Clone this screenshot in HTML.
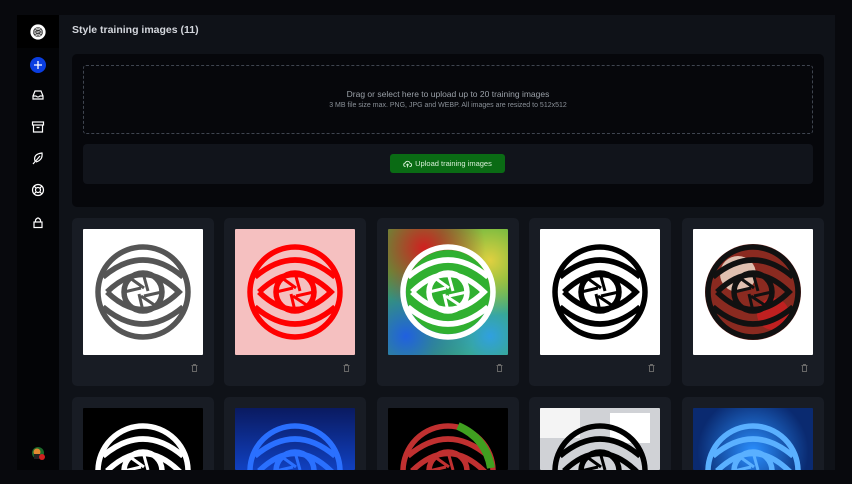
<!DOCTYPE html>
<html><head><meta charset="utf-8"><style>
*{margin:0;padding:0;box-sizing:border-box}
body{width:852px;height:484px;background:#08090d;font-family:"Liberation Sans",sans-serif;position:relative;overflow:hidden}
.side{position:absolute;left:17px;top:15px;width:42px;height:455px;background:#030406;border-radius:6px 0 0 0}
.side .logo{position:absolute;left:0;top:0;width:42px;height:33px;background:#000}
.ic{position:absolute;left:13px;width:16px;height:16px}
.main{position:absolute;left:59px;top:15px;width:776px;height:455px;background:#0f1218;overflow:hidden}
.title{position:absolute;left:13px;top:9px;color:#d4d7dd;font-size:10.5px;font-weight:bold}
.up{position:absolute;left:13px;top:39px;width:752px;height:153px;background:#06070b;border-radius:5px}
.dash{position:absolute;left:11px;top:11px;width:730px;height:69px;border:1px dashed #3f4550;border-radius:3px;text-align:center;color:#9aa0a8}
.dash .a{font-size:8.5px;margin-top:23px}
.dash .b{font-size:7px;margin-top:3px;color:#8a9098}
.bp{position:absolute;left:11px;top:90px;width:730px;height:40px;background:#11141b;border-radius:4px}
.btn{position:absolute;left:307px;top:10px;width:115px;height:19px;background:#0a6b14;border-radius:3px;color:#d8f0d8;font-size:7.5px;line-height:19px;text-align:center}
.btn svg{vertical-align:-2px;margin-right:3px}
.card{position:absolute;width:142px;height:168px;background:#181c24;border-radius:5px;overflow:hidden}
.card.r2{height:73px;border-radius:5px 5px 0 0}
.card .im{position:absolute;left:11px;top:11px;width:120px;height:126px;overflow:hidden;border-radius:1px}
.card.r2 .im{height:62px}
.card .tr{position:absolute;left:119px;top:146px;width:7px;height:8px}
</style></head><body>
<svg width="0" height="0" style="position:absolute"><defs>
<g id="eye" fill="none" stroke-width="5.5">
<circle cx="60" cy="63" r="45"/>
<path d="M20 48 Q60 14 100 48"/><path d="M20 78 Q60 112 100 78"/>
<path d="M24 63 Q60 28 96 63 Q60 98 24 63"/>
<circle cx="60" cy="63" r="19"/>
<path d="M60 44 L65 62 M79 63 L61 67 M60 82 L56 65 M41 63 L58 59 M47 49 L61 59 M73 77 L58 67" stroke-width="3"/>
</g></defs></svg>
<div class="side"><div class="logo"><svg style="position:absolute;left:13px;top:9px" width="16" height="16" viewBox="0 0 120 126"><circle cx="60" cy="63" r="60" fill="#fff"/><use href="#eye" stroke="#000" transform="translate(12,13) scale(.8)"/></svg></div>
<svg class="ic" style="top:42px" viewBox="0 0 16 16"><circle cx="8" cy="8" r="8" fill="#0a3ee0"/><path d="M8 4v8M4 8h8" stroke="#fff" stroke-width="1.3"/></svg>
<svg class="ic" style="top:72px" viewBox="0 0 16 16" fill="none" stroke="#fff" stroke-width="1.2"><path d="M3 9 L5 4 H11 L13 9 V12 H3 Z M3 9 H6 Q8 11 10 9 H13"/></svg>
<svg class="ic" style="top:104px" viewBox="0 0 16 16" fill="none" stroke="#fff" stroke-width="1.2"><rect x="2.5" y="3" width="11" height="3"/><path d="M3.5 6 V13 H12.5 V6 M6.5 8.5 H9.5"/></svg>
<svg class="ic" style="top:135px" viewBox="0 0 16 16" fill="none" stroke="#fff" stroke-width="1.2"><path d="M3 14 L10 6 M5 11 Q3 4 12 3 Q13 10 6 12"/></svg>
<svg class="ic" style="top:167px" viewBox="0 0 16 16" fill="none" stroke="#fff" stroke-width="1.2"><circle cx="8" cy="8" r="5.5"/><circle cx="8" cy="8" r="2.5"/><path d="M4 4l2.2 2.2M12 4l-2.2 2.2M4 12l2.2-2.2M12 12l-2.2-2.2"/></svg>
<svg class="ic" style="top:199px" viewBox="0 0 16 16" fill="none" stroke="#fff" stroke-width="1.2"><rect x="4" y="8" width="8" height="5.5"/><path d="M5.5 8 V6 Q8 2 10.5 6 V8"/></svg>
<svg style="position:absolute;left:13px;top:430px" width="16" height="16" viewBox="0 0 16 16"><circle cx="8" cy="8" r="6" fill="#1b6a2a"/><circle cx="7" cy="7" r="3.5" fill="#e08a30"/><rect x="4" y="9" width="6" height="5" fill="#222"/><circle cx="12" cy="12" r="3" fill="#d02020"/></svg>
</div>
<div class="main">
<div class="title">Style training images (11)</div>
<div class="up"><div class="dash"><div class="a">Drag or select here to upload up to 20 training images</div><div class="b">3 MB file size max. PNG, JPG and WEBP. All images are resized to 512x512</div></div>
<div class="bp"><div class="btn"><svg width="9" height="8" viewBox="0 0 9 8" fill="none" stroke="#d8f0d8" stroke-width="0.9"><path d="M2.5 6.5H2A1.8 1.8 0 0 1 2.2 3 2.5 2.5 0 0 1 7 3.3 1.6 1.6 0 0 1 7 6.5H6.5M4.5 7.5V4M3.3 5.2 4.5 4 5.7 5.2"/></svg>Upload training images</div></div></div>

<div class="card" style="left:13px;top:203px"><div class="im" style="background:#fff"><svg width="120" height="126"><use href="#eye" stroke="#555"/></svg></div><svg class="tr" viewBox="0 0 7 8" fill="none" stroke="#666"><path d="M0.5 1.5h6M1.5 1.5v6h4v-6M2.5 1.5v-1h2v1"/></svg></div>
<div class="card" style="left:165px;top:203px"><div class="im" style="background:#f5c0c0"><svg width="120" height="126"><use href="#eye" stroke="#f00"/></svg></div><svg class="tr" viewBox="0 0 7 8" fill="none" stroke="#666"><path d="M0.5 1.5h6M1.5 1.5v6h4v-6M2.5 1.5v-1h2v1"/></svg></div>
<div class="card" style="left:318px;top:203px"><div class="im" style="background:radial-gradient(circle at 30% 15%,#d02020,transparent 45%),radial-gradient(circle at 85% 25%,#e0d040,transparent 40%),radial-gradient(circle at 15% 85%,#2060e0,transparent 45%),radial-gradient(circle at 85% 85%,#30a0e0,transparent 40%),#40b040"><svg width="120" height="126"><circle cx="60" cy="63" r="42" fill="#30b030"/><use href="#eye" stroke="#fff"/></svg></div><svg class="tr" viewBox="0 0 7 8" fill="none" stroke="#666"><path d="M0.5 1.5h6M1.5 1.5v6h4v-6M2.5 1.5v-1h2v1"/></svg></div>
<div class="card" style="left:470px;top:203px"><div class="im" style="background:#fff"><svg width="120" height="126"><use href="#eye" stroke="#000"/></svg></div><svg class="tr" viewBox="0 0 7 8" fill="none" stroke="#666"><path d="M0.5 1.5h6M1.5 1.5v6h4v-6M2.5 1.5v-1h2v1"/></svg></div>
<div class="card" style="left:623px;top:203px"><div class="im" style="background:#fff"><svg width="120" height="126"><circle cx="60" cy="63" r="48" fill="#8a2a20"/><circle cx="45" cy="45" r="18" fill="#e0c0b0"/><circle cx="80" cy="85" r="16" fill="#c02020"/><use href="#eye" stroke="#111"/></svg></div><svg class="tr" viewBox="0 0 7 8" fill="none" stroke="#666"><path d="M0.5 1.5h6M1.5 1.5v6h4v-6M2.5 1.5v-1h2v1"/></svg></div>

<div class="card r2" style="left:13px;top:382px"><div class="im" style="background:#000"><svg width="120" height="126"><use href="#eye" stroke="#fff"/></svg></div></div>
<div class="card r2" style="left:165px;top:382px"><div class="im" style="background:linear-gradient(#0a1a60,#1040c0)"><svg width="120" height="126"><use href="#eye" stroke="#2a70ff"/></svg></div></div>
<div class="card r2" style="left:318px;top:382px"><div class="im" style="background:#000"><svg width="120" height="126"><use href="#eye" stroke="#c03030"/><path d="M70 18 Q98 30 103 60" stroke="#40a020" stroke-width="8" fill="none"/></svg></div></div>
<div class="card r2" style="left:470px;top:382px"><div class="im" style="background:#d0d2d6"><svg width="120" height="126"><rect x="0" y="0" width="40" height="30" fill="#f4f4f4"/><rect x="70" y="5" width="40" height="30" fill="#fff"/><use href="#eye" stroke="#000"/></svg></div></div>
<div class="card r2" style="left:623px;top:382px"><div class="im" style="background:radial-gradient(circle at 50% 70%,#2a8fff,#0a2a70 75%)"><svg width="120" height="126"><use href="#eye" stroke="#5ab0ff"/></svg></div></div>
</div>
</body></html>
